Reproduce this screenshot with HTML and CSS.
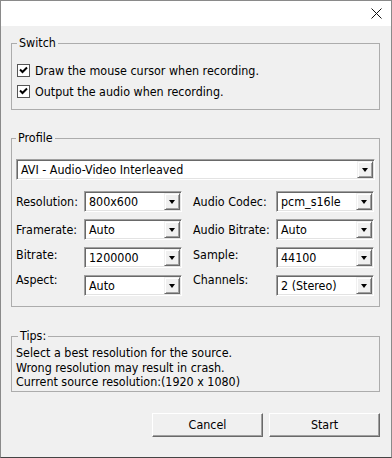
FILE: index.html
```html
<!DOCTYPE html>
<html lang="en">
<head>
  <meta charset="UTF-8" />
  <title>Recording Options</title>
  <link rel="stylesheet" href="styles.css">
</head>
<body>

  <div class="window">
    <div class="titlebar">
      <svg class="close" width="11" height="11" viewBox="0 0 11 11">
        <path d="M0.5 0.5 L10.5 10.5 M10.5 0.5 L0.5 10.5" stroke="#111" stroke-width="1" fill="none"/>
      </svg>
    </div>

    <div class="content">
      <fieldset class="group switch">
        <legend>Switch</legend>
        <label class="check">
          <span class="box"><svg width="9" height="9" viewBox="0 0 9 9"><path d="M1 3.5 L3.5 6 L8 1.5" stroke="#000" stroke-width="2" fill="none"/></svg></span>
          Draw the mouse cursor when recording.
        </label>
        <label class="check">
          <span class="box"><svg width="9" height="9" viewBox="0 0 9 9"><path d="M1 3.5 L3.5 6 L8 1.5" stroke="#000" stroke-width="2" fill="none"/></svg></span>
          Output the audio when recording.
        </label>
      </fieldset>

      <fieldset class="group profile">
        <legend>Profile</legend>
        <div class="combo">
          <span class="value">AVI - Audio-Video Interleaved</span>
          <span class="arrow"><i></i></span>
        </div>

        <div class="fields">
          <span class="lbl">Resolution:</span>
          <div class="combo"><span class="value">800x600</span><span class="arrow"><i></i></span></div>
          <span class="lbl right">Audio Codec:</span>
          <div class="combo"><span class="value">pcm_s16le</span><span class="arrow"><i></i></span></div>

          <span class="lbl">Framerate:</span>
          <div class="combo"><span class="value">Auto</span><span class="arrow"><i></i></span></div>
          <span class="lbl right">Audio Bitrate:</span>
          <div class="combo"><span class="value">Auto</span><span class="arrow"><i></i></span></div>

          <span class="lbl up3">Bitrate:</span>
          <div class="combo"><span class="value">1200000</span><span class="arrow"><i></i></span></div>
          <span class="lbl right up3">Sample:</span>
          <div class="combo"><span class="value">44100</span><span class="arrow"><i></i></span></div>

          <span class="lbl up6">Aspect:</span>
          <div class="combo"><span class="value">Auto</span><span class="arrow"><i></i></span></div>
          <span class="lbl right up6">Channels:</span>
          <div class="combo"><span class="value">2 (Stereo)</span><span class="arrow"><i></i></span></div>
        </div>
      </fieldset>

      <fieldset class="group tips">
        <legend>Tips:</legend>
        <p>Select a best resolution for the source.<br>
        Wrong resolution may result in crash.<br>
        Current source resolution:(1920 x 1080)</p>
      </fieldset>

      <div class="buttons">
        <button class="btn">Cancel</button>
        <button class="btn">Start</button>
      </div>
    </div>
  </div>

</body>
</html>
```

FILE: styles.css
```css
body {
  margin: 0;
  background: #fff;
  color: #000;
  font-family: "DejaVu Sans Condensed", "DejaVu Sans", sans-serif;
  font-size: 12.4px;
}

.window {
  width: 392px;
  height: 458px;
  box-sizing: border-box;
  border: 1px solid #8a8a8a;
  border-bottom-color: #444;
  background: #f0f0f0;
}

.titlebar {
  height: 25px;
  background: #fff;
  display: flex;
  align-items: center;
  justify-content: flex-end;
  padding-right: 9px;
}

.content {
  padding: 0 11px 0 10px;
}

.group {
  margin: 0;
  border: 1px solid #acacac;
  min-width: 0;
}

.group legend {
  padding: 0 2px;
  line-height: 14px;
}

/* switch */
.switch {
  margin-top: 10px;
  padding: 10px 5px 7px;
}

.check {
  display: flex;
  align-items: center;
  gap: 5px;
  height: 21px;
}

.box {
  width: 11px;
  height: 11px;
  background: #fff;
  border: 1px solid #555;
  display: flex;
  align-items: center;
  justify-content: center;
}

/* profile */
.profile {
  margin-top: 21px;
  padding: 14px 4px 10px;
}

.combo {
  height: 21px;
  box-sizing: border-box;
  display: flex;
  align-items: stretch;
  background: #fff;
  border: 1px solid;
  border-color: #a0a0a0 #fff #fff #a0a0a0;
  box-shadow: inset 1px 1px #696969, inset -1px -1px #e3e3e3;
  padding: 1px;
}

.combo .value {
  flex: 1;
  display: flex;
  align-items: center;
  padding-left: 3px;
  white-space: nowrap;
  overflow: hidden;
}

.combo .arrow {
  width: 16px;
  box-sizing: border-box;
  background: #f0f0f0;
  border: 1px solid;
  border-color: #f0f0f0 #696969 #696969 #f0f0f0;
  box-shadow: inset 1px 1px #fff, inset -1px -1px #a0a0a0;
  display: flex;
  align-items: center;
  justify-content: center;
}

.combo .arrow i {
  width: 0;
  height: 0;
  border-left: 3.5px solid transparent;
  border-right: 3.5px solid transparent;
  border-top: 4px solid #000;
  margin-top: 1px;
}

.fields {
  margin-top: 11px;
  display: grid;
  grid-template-columns: 68px 98px 94px 98px;
  grid-auto-rows: 21px;
  row-gap: 7px;
}

.fields .lbl {
  align-self: center;
  white-space: nowrap;
  line-height: 14px;
}

.fields .lbl.right {
  padding-left: 11px;
}

.fields .lbl.up3 {
  align-self: start;
  margin-top: 1px;
}

.fields .lbl.up6 {
  align-self: start;
  margin-top: -2px;
}

/* tips */
.tips {
  margin-top: 22px;
  padding: 3px 4px 1px;
}

.tips legend {
  margin-left: 2px;
}

.tips p {
  margin: 0;
  line-height: 14.5px;
}

/* buttons */
.buttons {
  margin-top: 21px;
  display: flex;
  justify-content: flex-end;
  gap: 6px;
}

.btn {
  width: 111px;
  height: 24px;
  font: inherit;
  color: #000;
  background: #f0f0f0;
  border: 1px solid;
  border-color: #fff #696969 #696969 #fff;
  box-shadow: inset -1px -1px #a0a0a0;
  padding: 0;
}
```
